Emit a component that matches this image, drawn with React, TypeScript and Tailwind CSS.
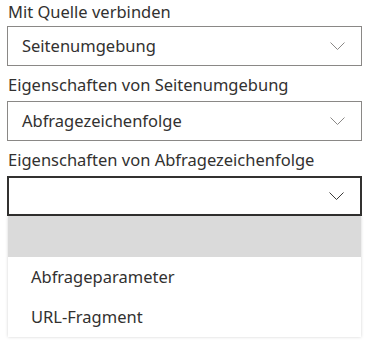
import React from 'react'

const font = { fontFamily: '"Noto Sans", "Open Sans", sans-serif' }

function Chevron({ dark }: { dark?: boolean }) {
  return (
    <svg width="15" height="8" viewBox="0 0 15 8" fill="none" stroke={dark ? '#3b3a39' : '#8a8886'} strokeWidth="1">
      <polyline points="0.5,0.5 7.5,7.5 14.5,0.5" />
    </svg>
  )
}

function Label({ text, first }: { text: string; first?: boolean }) {
  return (
    <div className={`text-[16.5px] leading-[24px] text-[#323130] pl-[1px] ${first ? 'pt-0 pb-[2px]' : 'pt-[7px] pb-[4px]'}`}>
      {text}
    </div>
  )
}

function Box({ value, open }: { value?: string; open?: boolean }) {
  return (
    <div
      className={`h-[40px] flex items-center justify-between pl-[14px] pr-[16px] bg-white ${
        open ? 'border-2 border-[#323130]' : 'border border-[#8a8886]'
      }`}
    >
      <span className="text-[16.5px] text-[#323130]">{value}</span>
      <Chevron dark={open} />
    </div>
  )
}

export default function App() {
  return (
    <div className="w-[371px] h-[340px] bg-white overflow-hidden" style={font}>
      <div className="ml-[7px] w-[355px]">
        <Label text="Mit Quelle verbinden" first />
        <Box value="Seitenumgebung" />
        <Label text="Eigenschaften von Seitenumgebung" />
        <Box value="Abfragezeichenfolge" />
        <Label text="Eigenschaften von Abfragezeichenfolge" />
        <Box open />
        <div className="mx-[1px] bg-white shadow-[0_0_3px_rgba(0,0,0,0.18)]">
          <div className="h-[41px] bg-[#dadada]" />
          <div className="h-[40px] flex items-center pl-[23px] text-[16.5px] text-[#323130]">Abfrageparameter</div>
          <div className="h-[40px] flex items-center pl-[23px] text-[16.5px] text-[#323130]">URL-Fragment</div>
        </div>
      </div>
    </div>
  )
}
